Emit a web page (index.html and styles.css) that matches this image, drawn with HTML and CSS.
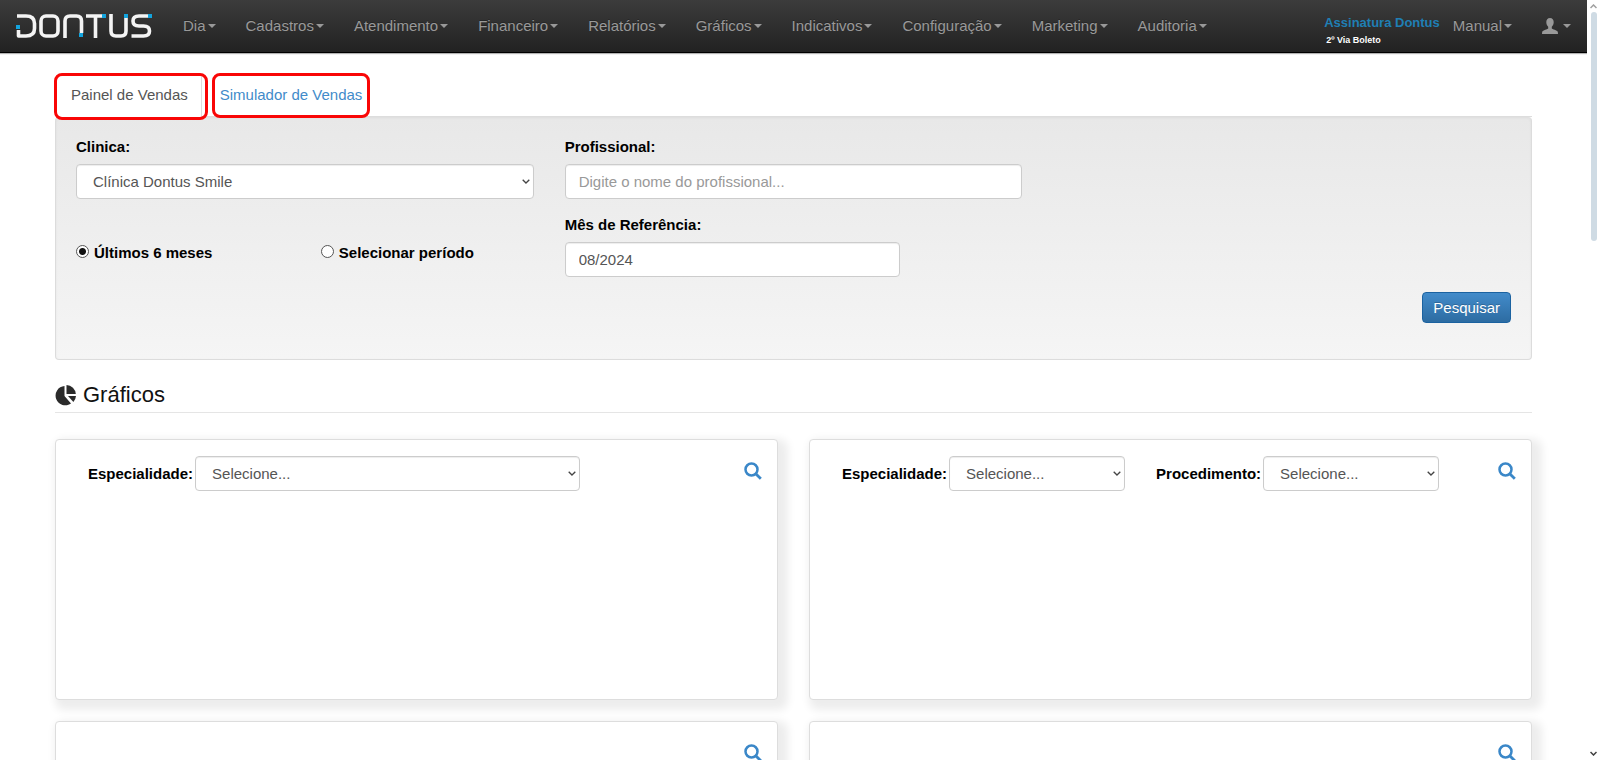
FILE: index.html
```html
<!DOCTYPE html>
<html lang="pt-BR">
<head>
<meta charset="utf-8">
<title>Dontus - Painel de Vendas</title>
<link rel="stylesheet" href="styles.css">
</head>
<body>
<svg class="defs" aria-hidden="true">
  <symbol id="search" viewBox="0 0 18 18">
    <circle cx="7.5" cy="7.5" r="6" fill="none" stroke="currentColor" stroke-width="2.5"/>
    <path d="M12 12l4.8 4.8" fill="none" stroke="currentColor" stroke-width="2.8"/>
  </symbol>
</svg>
<div class="page">
  <header class="navbar">
    <a class="brand" href="#" aria-label="Dontus">
      <svg width="136" height="26" viewBox="0 0 136 26" fill="none">
        <g stroke="#f4f4f4" stroke-width="3.6" stroke-linejoin="round">
          <path d="M1 3h9q8.500 0 8.500 7.500v5q0 7.500-8.500 7.500h-7.500v-6"/>
          <rect x="25" y="3" width="17" height="20" rx="5"/>
          <path d="M49 25v-17q0-5 5-5h6.500q5 0 5 5v12"/>
          <path d="M70 3h16M79.500 3v22"/>
          <path d="M95 1v17q0 5 5 5h5q5 0 5-5v-13"/>
          <path d="M132 3h-9q-6 0-6 5t6 5h4.500q6 0 6 5t-6 5h-12"/>
        </g>
        <g fill="#13a4de">
          <rect x="0" y="12" width="4" height="4"/>
          <rect x="63" y="20" width="4" height="4"/>
          <rect x="86" y="1" width="4" height="4"/>
          <rect x="108" y="1" width="4" height="4"/>
          <rect x="132" y="1" width="4" height="4"/>
        </g>
      </svg>
    </a>
    <nav class="menu">
      <a class="item" href="#">Dia<i class="caret"></i></a>
      <a class="item" href="#">Cadastros<i class="caret"></i></a>
      <a class="item" href="#">Atendimento<i class="caret"></i></a>
      <a class="item" href="#">Financeiro<i class="caret"></i></a>
      <a class="item" href="#">Relatórios<i class="caret"></i></a>
      <a class="item" href="#">Gráficos<i class="caret"></i></a>
      <a class="item" href="#">Indicativos<i class="caret"></i></a>
      <a class="item" href="#">Configuração<i class="caret"></i></a>
      <a class="item" href="#">Marketing<i class="caret"></i></a>
      <a class="item" href="#">Auditoria<i class="caret"></i></a>
    </nav>
    <div class="account">
      <div class="plan">
        <a class="plan-name" href="#">Assinatura Dontus</a>
        <a class="plan-bill" href="#">2º Via Boleto</a>
      </div>
      <a class="item manual" href="#">Manual<i class="caret"></i></a>
      <a class="item user" href="#" aria-label="Usuário">
        <svg width="16" height="16" viewBox="0 0 16 16" fill="currentColor"><path d="M8 0C5.600 0 4.300 1.700 4.300 4c0 2 .7 3.700 1.900 4.700v1.700c-.3.700-5.400 1.700-6 3.300L0 16h16l-.2-2.300c-.6-1.600-5.700-2.600-6-3.300V8.700c1.200-1 1.900-2.700 1.900-4.700 0-2.300-1.300-4-3.700-4z"/></svg>
        <i class="caret"></i>
      </a>
    </div>
  </header>

  <main class="content">
    <nav class="tabs">
      <a class="tab tab-active" href="#">Painel de Vendas</a>
      <a class="tab tab-link" href="#">Simulador de Vendas</a>
    </nav>

    <form class="panel">
      <div class="fields">
        <div class="field">
          <label for="clinica">Clinica:</label>
          <select class="control" id="clinica"><option>Clínica Dontus Smile</option></select>
        </div>
        <div class="field">
          <label for="profissional">Profissional:</label>
          <input class="control" id="profissional" type="text" placeholder="Digite o nome do profissional...">
        </div>
        <div class="periods">
          <label class="period"><input class="radio" type="radio" name="periodo" checked>Últimos 6 meses</label>
          <label class="period"><input class="radio" type="radio" name="periodo">Selecionar período</label>
        </div>
        <div class="field month">
          <label for="mes">Mês de Referência:</label>
          <input class="control" id="mes" type="text" value="08/2024">
        </div>
      </div>
      <div class="actions"><button class="submit" type="button">Pesquisar</button></div>
    </form>

    <h2 class="heading">
      <svg width="21" height="21" viewBox="0 0 21 21" fill="#2b2b2b">
        <path d="M9.500 1v10l6.500 7.500A9.700 9.700 0 1 1 9.500 1z"/>
        <path d="M11.500 0a9.500 9.500 0 0 1 9.300 9h-9.300z"/>
        <path d="M13 11h8q-.3 3.600-2.600 6z"/>
      </svg>
      Gráficos
    </h2>

    <div class="cards">
      <section class="card">
        <div class="filter filter-wide">
          <label for="esp1">Especialidade:</label>
          <select class="control" id="esp1"><option>Selecione...</option></select>
        </div>
        <button class="search" type="button" aria-label="Buscar"><svg width="18" height="18"><use href="#search"/></svg></button>
      </section>
      <section class="card">
        <div class="filter">
          <label for="esp2">Especialidade:</label>
          <select class="control" id="esp2"><option>Selecione...</option></select>
        </div>
        <div class="filter">
          <label for="proc2">Procedimento:</label>
          <select class="control" id="proc2"><option>Selecione...</option></select>
        </div>
        <button class="search" type="button" aria-label="Buscar"><svg width="18" height="18"><use href="#search"/></svg></button>
      </section>
      <section class="card">
        <button class="search" type="button" aria-label="Buscar"><svg width="18" height="18"><use href="#search"/></svg></button>
      </section>
      <section class="card">
        <button class="search" type="button" aria-label="Buscar"><svg width="18" height="18"><use href="#search"/></svg></button>
      </section>
    </div>
  </main>
</div>
<div class="scrollbar" aria-hidden="true">
  <svg width="7" height="5" viewBox="0 0 7 5" fill="none" stroke="#a0a0a0" stroke-width="1.500"><path d="M.5 4l3-3 3 3"/></svg>
  <div class="track"><div class="thumb"></div></div>
  <svg width="7" height="5" viewBox="0 0 7 5" fill="none" stroke="#404040" stroke-width="1.500"><path d="M.5 1l3 3 3-3"/></svg>
</div>
</body>
</html>
```
FILE: styles.css
```css
* { box-sizing: border-box; }
body {
  margin: 0;
  height: 100vh;
  display: flex;
  overflow: hidden;
  background: #fff;
  color: #000;
  font: 15px/20px "Liberation Sans", Arial, sans-serif;
}
a { text-decoration: none; }
.defs { display: none; }
.page { flex: 1; min-width: 0; overflow: hidden; }

.navbar {
  display: flex;
  align-items: center;
  height: 53px;
  padding: 0 16px;
  background: linear-gradient(#3c3c3c, #222);
  border-bottom: 1px solid #000;
  box-shadow: 0 1px 1px rgba(0, 0, 0, .3);
}
.brand { display: flex; margin-right: 16px; }
.menu { display: flex; }
.item {
  display: flex;
  align-items: center;
  padding: 0 15px;
  color: #999;
  text-shadow: 0 -1px 0 rgba(0, 0, 0, .25);
}
.caret {
  margin-left: 2px;
  border: 4px solid transparent;
  border-top-color: currentColor;
  border-bottom: 0;
}
.account { display: flex; align-items: center; margin-left: auto; }
.plan { display: flex; flex-direction: column; padding-top: 8px; font-weight: bold; }
.plan-name { color: #1f7fb5; font-size: 13px; line-height: 20px; }
.plan-bill { padding-left: 2px; color: #fff; font-size: 9px; line-height: 14px; }
.manual { padding-left: 13px; }
.user { padding-right: 0; }
.user .caret { margin-left: 5px; }

.content { padding: 22px 55px 0; }
.tabs { display: flex; gap: 2px; border-bottom: 1px solid #ddd; }
.tab { position: relative; padding: 9px 8px 11px 16px; color: #428bca; line-height: 21px; }
.tab-active {
  margin-bottom: -1px;
  padding-right: 13px;
  padding-bottom: 12px;
  color: #555;
  background: #fff;
  border-right: 1px solid #ddd;
}
.tab::after {
  content: "";
  position: absolute;
  inset: -2px 0 -2px 8px;
  border: 3px solid #f90606;
  border-radius: 8px;
}
.tab-active::after { inset: -2px -7px -3px -1px; z-index: 1; }

.panel {
  padding: 20px 20px 36px;
  background: linear-gradient(#e8e8e8, #f5f5f5);
  border: 1px solid #dcdcdc;
  border-top: 0;
  border-radius: 4px;
  box-shadow: inset 0 1px 3px rgba(0, 0, 0, .05);
}
.fields { display: grid; grid-template-columns: repeat(3, 1fr); gap: 16px 31px; }
.field { display: flex; flex-direction: column; gap: 7px; }
.month .control { width: calc(75% - 8px); }
label { font-weight: bold; }
.control {
  width: 100%;
  height: 35px;
  padding: 6px 13px;
  color: #555;
  background: #fff;
  border: 1px solid #ccc;
  border-radius: 4px;
  box-shadow: inset 0 1px 1px rgba(0, 0, 0, .075);
  font: inherit;
}
select.control {
  appearance: none;
  padding-left: 16px;
  background: #fff url("data:image/svg+xml,%3Csvg xmlns='http://www.w3.org/2000/svg' width='8' height='5' fill='none' stroke='%23444' stroke-width='1.3'%3E%3Cpath d='M.7.7L4 4 7.300.7'/%3E%3C/svg%3E") no-repeat right 3px center;
}
.control::placeholder { color: #999; }
.periods { display: flex; grid-column: 1; align-items: center; padding-top: 14px; }
.period { display: flex; align-items: center; gap: 5px; flex: 0 0 calc(50% + 16px); }
.radio {
  appearance: none;
  width: 13px;
  height: 13px;
  margin: 0 0 4px;
  background: #fff;
  border: 1px solid #555;
  border-radius: 50%;
}
.radio:checked { background: radial-gradient(#111 0 3px, #fff 4px); }
.actions { display: flex; justify-content: flex-end; margin-top: 15px; }
.submit {
  height: 31px;
  padding: 0 10px;
  color: #fff;
  background: linear-gradient(#428bca, #2d6ca2);
  border: 1px solid #1b62a0;
  border-radius: 4px;
  font: inherit;
  text-shadow: 0 -1px 0 rgba(0, 0, 0, .2);
}

.heading {
  display: flex;
  align-items: center;
  gap: 7px;
  margin: 21px 0 26px;
  padding-bottom: 3px;
  border-bottom: 1px solid #e5e5e5;
  color: #111;
  font-size: 22px;
  font-weight: normal;
  line-height: 28px;
}

.cards { display: grid; grid-template-columns: 1fr 1fr; grid-auto-rows: 261px; gap: 21px 31px; }
.card {
  display: flex;
  align-items: flex-start;
  gap: 31px;
  padding: 16px 15px 0 32px;
  background: #fff;
  border: 1px solid #ddd;
  border-radius: 4px;
  box-shadow: 5px 5px 8px 5px #ededed;
}
.filter { display: flex; align-items: center; gap: 2px; flex: 0 0 42%; }
.filter-wide { flex-basis: 73%; }
.filter .control { flex: 1; width: auto; min-width: 0; }
.search { display: flex; margin: 6px 0 0 auto; padding: 0; border: 0; background: none; color: #3a87c8; }

.scrollbar { display: flex; flex-direction: column; align-items: center; width: 13px; padding: 4px 0; }
.track { flex: 1; padding-top: 3px; }
.thumb { width: 6px; height: 31%; border-radius: 3px; background: #cfdbe4; }
```
